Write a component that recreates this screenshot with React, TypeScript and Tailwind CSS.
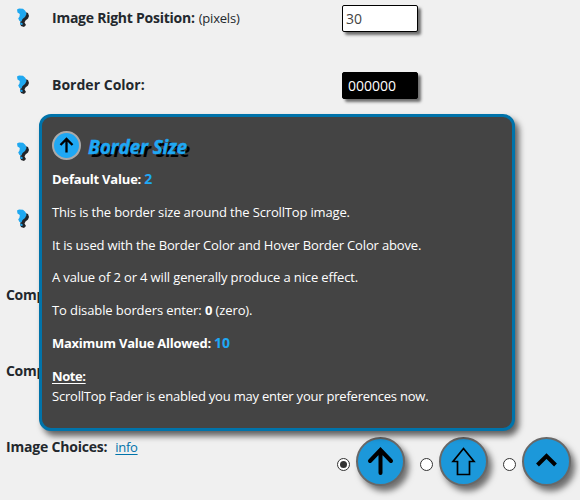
import React from "react";

function Help() {
  return (
    <svg className="ml-[16px] w-[14px] h-[20px] shrink-0" viewBox="0 0 14 20">
      <path d="M9 4L12 5L13 8L12 10.5L9.5 12.5L8.5 14.5L10 17L8 19L5 18L4 15.5L5 11.5L9 8Z" fill="#222428" />
      <path d="M1 1.5L3 0.6L7 0.8L9.5 3L10.5 6L9 9L6.5 11L5.5 13.5L3.5 13L2.2 10.5L3.5 8.5L3.8 6L1.5 4.5Z" fill="#1fa8f0" />
      <path d="M4 14.5L6.5 15L6.5 17L4.5 16.8Z" fill="#1fa8f0" />
    </svg>
  );
}

function Field({ label, hint, children }: { label?: React.ReactNode; hint?: string; children?: React.ReactNode }) {
  return (
    <div className="flex h-[67px] items-start">
      <div className="flex h-[36px] w-[342px] items-center">
        <Help />
        <div className="ml-[22px] flex items-baseline gap-[4px]">
          {label}
          {hint && <span className="text-[13px] tracking-[-0.2px]">{hint}</span>}
        </div>
      </div>
      {children}
    </div>
  );
}

function Choice({ checked, children }: { checked?: boolean; children: React.ReactNode }) {
  return (
    <div className="flex w-[83px] shrink-0 items-center gap-[6px]">
      <span className="mt-[6px] flex size-[13px] shrink-0 items-center justify-center rounded-full border border-[#333] bg-white">
        {checked && <span className="size-[7px] rounded-full bg-[#333]" />}
      </span>
      <span className="size-[49px] shrink-0 rounded-full border-2 border-[#686868] bg-[#1c98da] shadow-[4px_5px_6px_rgba(0,0,0,0.55)]">
        <svg className="size-[45px]" viewBox="0 0 45 45" fill="none" stroke="#000">
          {children}
        </svg>
      </span>
    </div>
  );
}

export default function App() {
  return (
    <div className="relative h-[500px] w-[580px] overflow-hidden bg-[#f0f0f0] font-['Open_Sans','Noto_Sans',sans-serif] text-[14px] leading-[20px] text-[#23282d]">
      <Field label={<b className="whitespace-nowrap tracking-[-0.25px]">Image Right Position:</b>} hint="(pixels)">
        <div className="mt-[5px] h-[27px] w-[76px] rounded-[2px] border border-black bg-white pl-[3px] leading-[26px] text-[#444] shadow-[3px_3px_3px_rgba(0,0,0,0.55)]">30</div>
      </Field>
      <Field label={<b className="whitespace-nowrap tracking-[0.02px]">Border Color:</b>}>
        <div className="mt-[5px] h-[27px] w-[76px] rounded-[2px] border border-black bg-black pl-[5px] leading-[26px] text-white shadow-[3px_3px_3px_rgba(0,0,0,0.55)]">000000</div>
      </Field>
      <Field />
      <Field />
      <div className="flex h-[76px] items-start pl-[6px] pt-[17px]"><b className="tracking-[-0.3px]">Comp</b></div>
      <div className="flex h-[76px] items-start pl-[6px] pt-[17px]"><b className="tracking-[-0.3px]">Comp</b></div>
      <div className="flex items-start pl-[6px]">
        <div className="flex w-[331px] shrink-0 items-baseline gap-[8px] pt-[17px]">
          <b className="tracking-[-0.2px]">Image Choices:</b>
          <a className="text-[13px] tracking-[-0.3px] text-[#0073aa] underline underline-offset-2">info</a>
        </div>
        <div className="flex pt-[17px]">
          <Choice checked>
            <path d="M22.5 34V11M12 22L22.5 11L33 22" strokeWidth="4" strokeLinecap="round" />
          </Choice>
          <Choice>
            <path d="M22.5 9.5L33 22.5H28.5V35.5H16.5V22.5H12Z" strokeWidth="1.7" />
          </Choice>
          <Choice>
            <path d="M13.5 26L22.5 17L31.5 26" strokeWidth="4" />
          </Choice>
        </div>
      </div>

      <div className="absolute left-[39px] top-[114px] h-[317px] w-[476px] rounded-[12px] border-[3px] border-[#0073aa] bg-[#444] px-[10px] pt-[14px] text-[13px] leading-[20px] tracking-[-0.16px] text-white shadow-[4px_5px_6px_rgba(0,0,0,0.6)]">
        <div className="flex h-[29px] items-center gap-[7px]">
          <svg className="size-[29px]" viewBox="0 0 29 29" fill="none">
            <circle cx="14.5" cy="14.5" r="13.5" fill="#1fa8f4" stroke="#aaa" strokeWidth="2" />
            <path d="M14.5 21.5V8M8.5 14L14.5 8L20.5 14" stroke="#000" strokeWidth="2.3" />
          </svg>
          <h3 className="mt-[2px] text-[19px] font-bold italic tracking-[-0.15px] text-[#1fa8f4] [-webkit-text-stroke:0.4px_#1fa8f4] [text-shadow:3px_3px_0_#000]">Border Size</h3>
        </div>
        <p className="mt-[9px]"><b className="tracking-[-0.2px]">Default Value:</b> <b className="text-[14px] text-[#1fa8f4]">2</b></p>
        <p className="mt-[13px]">This is the border size around the ScrollTop image.</p>
        <p className="mt-[13px]">It is used with the Border Color and Hover Border Color above.</p>
        <p className="mt-[12px] tracking-[-0.13px]">A value of 2 or 4 will generally produce a nice effect.</p>
        <p className="mt-[13px] tracking-[-0.1px]">To disable borders enter: <b>0</b> (zero).</p>
        <p className="mt-[13px]"><b className="tracking-[-0.26px]">Maximum Value Allowed:</b> <b className="text-[14px] text-[#1fa8f4]">10</b></p>
        <p className="mt-[13px]"><b className="tracking-[-0.4px] underline underline-offset-2">Note:</b></p>
        <p className="tracking-[-0.21px]">ScrollTop Fader is enabled you may enter your preferences now.</p>
      </div>
    </div>
  );
}
